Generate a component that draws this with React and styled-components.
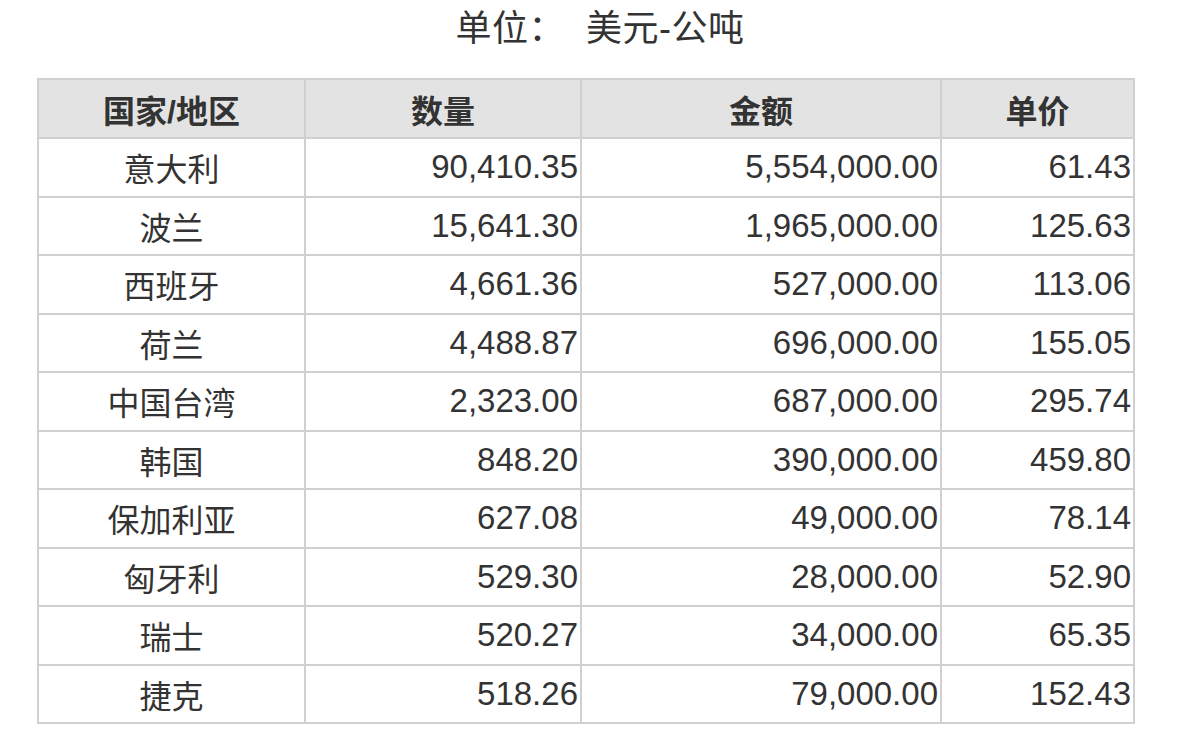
import React from "react";
import styled, { createGlobalStyle } from "styled-components";

const Global = createGlobalStyle`
  html, body { margin: 0; padding: 0; background: #fff; }
  body { font-family: "Liberation Sans", "Noto Sans CJK SC", sans-serif; color: #333; }
`;

const Page = styled.div`
  width: 1200px;
  height: 750px;
  display: flex;
  flex-direction: column;
  align-items: flex-start;
  overflow: hidden;
`;

const Title = styled.div`
  align-self: center;
  height: 78px;
  box-sizing: border-box;
  padding-top: 5px;
  font-size: 36px;
  line-height: 48px;
  color: #333;
  letter-spacing: 0.5px;
`;

const Table = styled.table`
  margin-left: 37px;
  border-collapse: collapse;
  table-layout: fixed;
  width: 1096px;
`;

const HeadCell = styled.th`
  background: #e3e3e3;
  border: 2px solid #d0d0d0;
  height: 57px;
  padding: 0;
  font-size: 32px;
  font-weight: bold;
  color: #333;
  text-align: center;
`;

const Cell = styled.td`
  border: 2px solid #d0d0d0;
  height: 56.5px;
  padding: 0 ${(p) => (p.$num ? "2px" : "0")} 0 0;
  font-size: ${(p) => (p.$num ? "33px" : "32px")};
  color: #333;
  text-align: ${(p) => (p.$num ? "right" : "center")};
  white-space: nowrap;
`;

const cols = [267, 276, 360, 193];

const rows = [
  ["意大利", "90,410.35", "5,554,000.00", "61.43"],
  ["波兰", "15,641.30", "1,965,000.00", "125.63"],
  ["西班牙", "4,661.36", "527,000.00", "113.06"],
  ["荷兰", "4,488.87", "696,000.00", "155.05"],
  ["中国台湾", "2,323.00", "687,000.00", "295.74"],
  ["韩国", "848.20", "390,000.00", "459.80"],
  ["保加利亚", "627.08", "49,000.00", "78.14"],
  ["匈牙利", "529.30", "28,000.00", "52.90"],
  ["瑞士", "520.27", "34,000.00", "65.35"],
  ["捷克", "518.26", "79,000.00", "152.43"],
];

export default function App() {
  return (
    <Page>
      <Global />
      <Title>单位：&nbsp;&nbsp;美元-公吨</Title>
      <Table>
        <colgroup>
          {cols.map((w, i) => (
            <col key={i} style={{ width: w }} />
          ))}
        </colgroup>
        <thead>
          <tr>
            <HeadCell>国家/地区</HeadCell>
            <HeadCell>数量</HeadCell>
            <HeadCell>金额</HeadCell>
            <HeadCell>单价</HeadCell>
          </tr>
        </thead>
        <tbody>
          {rows.map((r) => (
            <tr key={r[0]}>
              <Cell>{r[0]}</Cell>
              <Cell $num>{r[1]}</Cell>
              <Cell $num>{r[2]}</Cell>
              <Cell $num>{r[3]}</Cell>
            </tr>
          ))}
        </tbody>
      </Table>
    </Page>
  );
}
